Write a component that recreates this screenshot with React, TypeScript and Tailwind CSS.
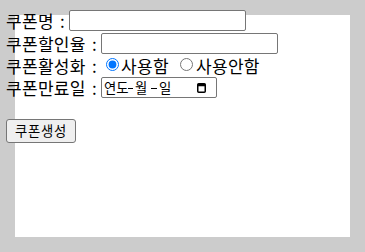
import React from "react";

const font = { fontFamily: '"Noto Sans CJK KR", "Noto Sans", sans-serif' };

function CalendarIcon() {
  return (
    <svg width="9" height="10" viewBox="0 0 9 10" className="block">
      <rect x="0.75" y="0.75" width="7.5" height="8.5" rx="1" fill="none" stroke="#000" strokeWidth="1.5" />
      <rect x="0.75" y="0.75" width="7.5" height="2.5" fill="#000" />
    </svg>
  );
}

function Label({ text, w }: { text: string; w: string }) {
  return (
    <>
      <span className={`${w} whitespace-nowrap`}>{text}</span>
      <span className="w-[15px] pl-[6px] tracking-normal">:</span>
    </>
  );
}

export default function App() {
  return (
    <div className="relative w-[365px] h-[252px] bg-[#cccccc] p-[15px]" style={font}>
      <div className="w-[335px] h-[222px] bg-white" />
      <form className="absolute left-[6px] top-[9px] text-[17px] tracking-[0.3px] text-black leading-none">
        <div className="flex items-center h-[23px]">
          <Label text="쿠폰명" w="w-[48px]" />
          <input type="text" className="w-[177px] h-[21px] border border-[#767676] rounded-[2px] bg-white outline-none" />
        </div>
        <div className="flex items-center h-[23px]">
          <Label text="쿠폰할인율" w="w-[80px]" />
          <input type="text" className="w-[177px] h-[21px] border border-[#767676] rounded-[2px] bg-white outline-none" />
        </div>
        <div className="flex items-center h-[21px]">
          <Label text="쿠폰활성화" w="w-[80px]" />
          <input type="radio" name="active" defaultChecked className="ml-[5px] -mt-[2px] w-[13px] h-[13px]" />
          <span className="ml-[2px] w-[48px] whitespace-nowrap">사용함</span>
          <input type="radio" name="active" className="ml-[11px] -mt-[2px] w-[13px] h-[13px]" />
          <span className="ml-[3px] whitespace-nowrap">사용안함</span>
        </div>
        <div className="flex items-center h-[23px]">
          <Label text="쿠폰만료일" w="w-[80px]" />
          <div className="w-[116px] h-[21px] border border-[#767676] rounded-[2px] bg-white flex items-center pl-[2px] text-[13.33px] tracking-normal">
            <span className="w-[24px] whitespace-nowrap">연도</span>
            <span className="w-[5px] h-[1px] bg-black mt-[2px]" />
            <span className="ml-[2px] w-[13px]">월</span>
            <span className="ml-[3px] w-[6px] h-[1px] bg-black mt-[2px]" />
            <span className="ml-[2px]">일</span>
            <span className="flex-1" />
            <span className="mr-[10px]">
              <CalendarIcon />
            </span>
          </div>
        </div>
        <div className="h-[20px]" />
        <button type="button" className="h-[24px] w-[70px] border border-[#767676] rounded-[3px] bg-[#efefef] text-[13.33px] tracking-[0.7px] text-black flex items-center justify-center">
          쿠폰생성
        </button>
      </form>
    </div>
  );
}
